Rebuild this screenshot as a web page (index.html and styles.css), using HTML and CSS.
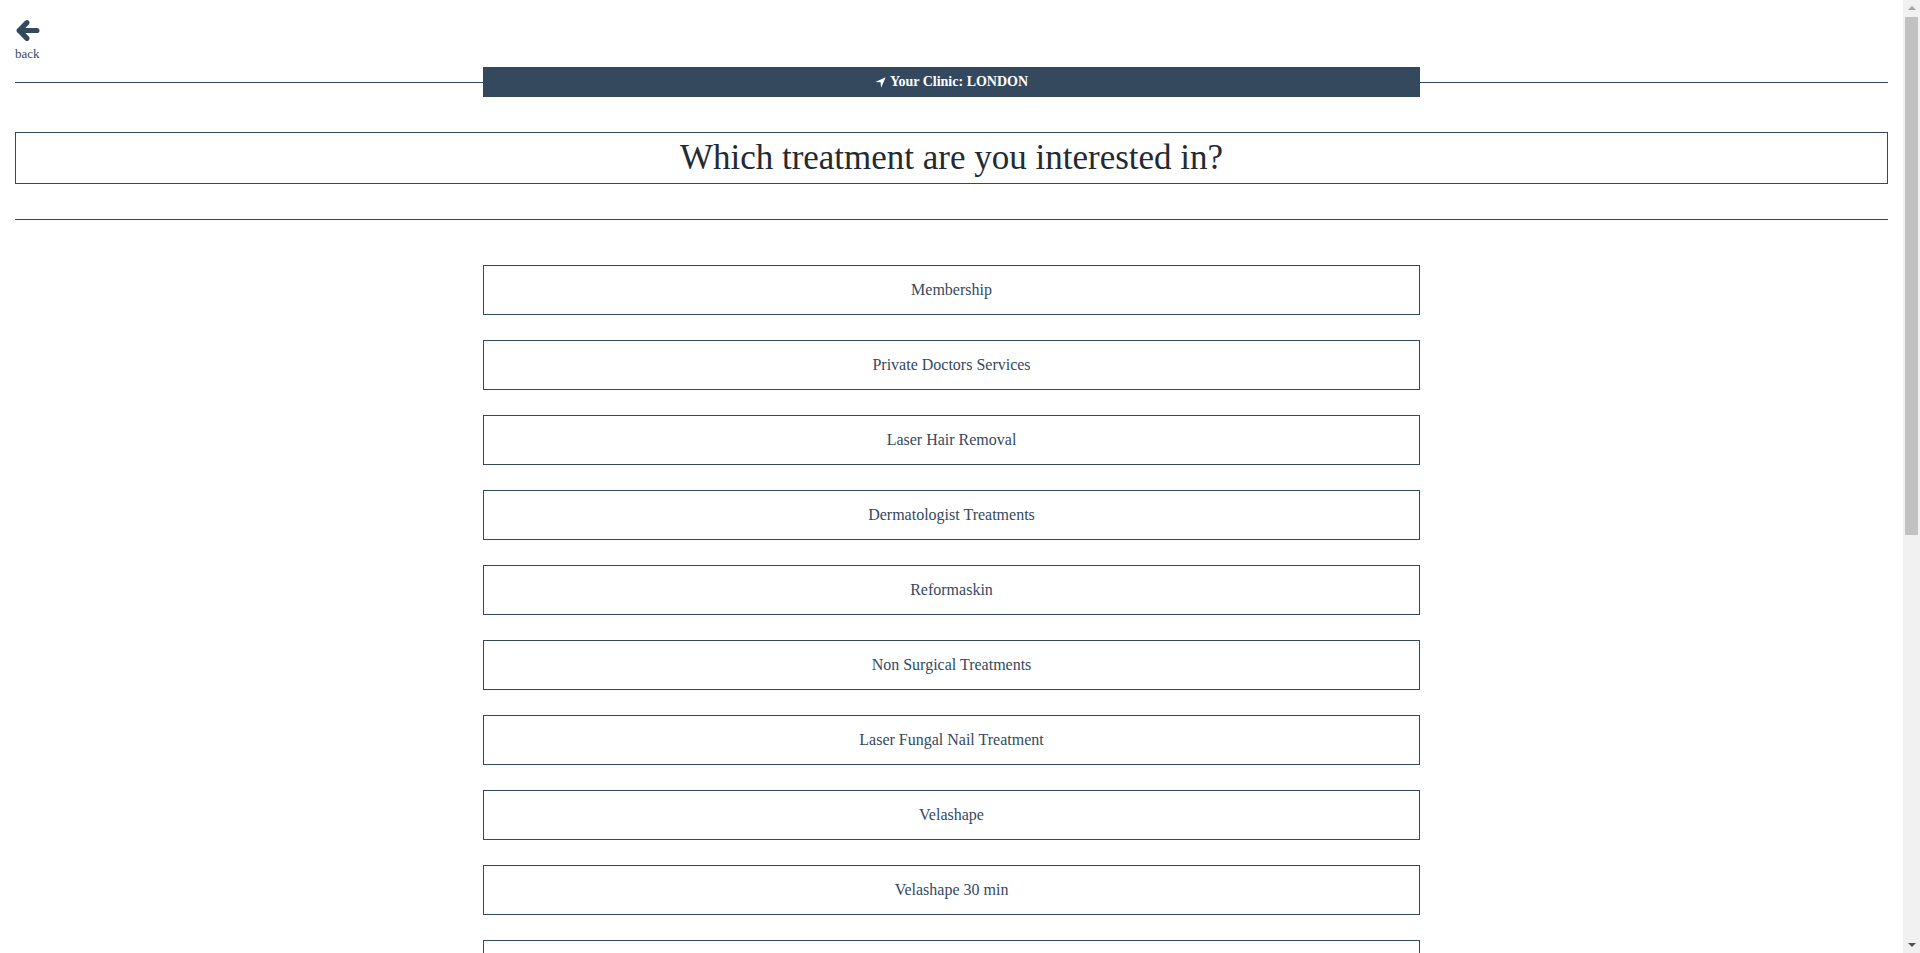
FILE: index.html
```html
<!DOCTYPE html>
<html lang="en">
<head>
<meta charset="utf-8">
<title>Which treatment are you interested in?</title>
<link rel="stylesheet" href="styles.css">
</head>
<body>
<div class="page">
  <a class="back" href="#">
    <svg class="back-icon" width="25" height="23" viewBox="0 0 24 22" aria-hidden="true">
      <path d="M21 11 H4 M11.5 3.5 L4 11 L11.5 18.5" fill="none" stroke="#34495e" stroke-width="5" stroke-linecap="round" stroke-linejoin="round"/>
    </svg>
    <span class="back-label">back</span>
  </a>

  <div class="clinic-row">
    <div class="rule"></div>
    <div class="clinic-bar">
      <svg class="loc-icon" width="11" height="11" viewBox="0 0 16 16" aria-hidden="true">
        <path d="M15.5 0.5 L0.5 7.2 L8.2 7.8 L8.8 15.5 Z" fill="#ffffff"/>
      </svg>
      <span>Your Clinic: LONDON</span>
    </div>
    <div class="rule"></div>
  </div>

  <h1 class="title">Which treatment are you interested in?</h1>

  <hr class="divider">

  <ul class="treatments">
    <li><button class="treatment">Membership</button></li>
    <li><button class="treatment">Private Doctors Services</button></li>
    <li><button class="treatment">Laser Hair Removal</button></li>
    <li><button class="treatment">Dermatologist Treatments</button></li>
    <li><button class="treatment">Reformaskin</button></li>
    <li><button class="treatment">Non Surgical Treatments</button></li>
    <li><button class="treatment">Laser Fungal Nail Treatment</button></li>
    <li><button class="treatment">Velashape</button></li>
    <li><button class="treatment">Velashape 30 min</button></li>
    <li><button class="treatment">Skin Consultation</button></li>
    <li><button class="treatment">Injectables</button></li>
    <li><button class="treatment">Chemical Peels</button></li>
    <li><button class="treatment">Microneedling</button></li>
    <li><button class="treatment">Tattoo Removal</button></li>
    <li><button class="treatment">Vein Treatments</button></li>
    <li><button class="treatment">Skin Tightening</button></li>
    <li><button class="treatment">Acne Treatments</button></li>
  </ul>
</div>

<div class="scrollbar" aria-hidden="true">
  <div class="scroll-arrow up"></div>
  <div class="scroll-thumb"></div>
  <div class="scroll-arrow down"></div>
</div>
</body>
</html>
```

FILE: styles.css
```css
html, body {
  margin: 0;
  padding: 0;
  background: #ffffff;
}

body {
  font-family: "Liberation Serif", "DejaVu Serif", serif;
  color: #34495e;
}

.page {
  width: calc(100% - 17px);
  box-sizing: border-box;
  padding: 19px 15px 40px 15px;
}

.back {
  display: inline-flex;
  flex-direction: column;
  align-items: flex-start;
  text-decoration: none;
  color: #34495e;
}

.back-icon {
  display: block;
}

.back-label {
  font-size: 13px;
  line-height: 14px;
  margin-top: 5px;
}

.clinic-row {
  display: flex;
  align-items: center;
  margin-top: 6px;
}

.rule {
  flex: 1;
  border-top: 1px solid #34495e;
}

.clinic-bar {
  width: 937px;
  height: 30px;
  background: #34495e;
  color: #ffffff;
  display: flex;
  align-items: center;
  justify-content: center;
  gap: 4px;
  font-weight: bold;
  font-size: 14px;
}

.loc-icon {
  display: block;
}

.title {
  margin: 35px 0 0 0;
  border: 1px solid #34495e;
  height: 50px;
  display: flex;
  align-items: center;
  justify-content: center;
  font-weight: normal;
  font-size: 35px;
  color: #222a33;
}

.divider {
  margin: 35px 0 0 0;
  border: 0;
  border-top: 1px solid #34495e;
  height: 0;
}

.treatments {
  list-style: none;
  margin: 45px 0 0 0;
  padding: 0;
  display: flex;
  flex-direction: column;
  align-items: center;
  gap: 25px;
}

.treatments li {
  width: 937px;
}

.treatment {
  width: 100%;
  height: 50px;
  background: #ffffff;
  border: 1px solid #34495e;
  border-radius: 0;
  color: #34495e;
  font-family: "Liberation Serif", "DejaVu Serif", serif;
  font-size: 16px;
  cursor: pointer;
  padding: 0;
}

.scrollbar {
  position: fixed;
  top: 0;
  right: 0;
  bottom: 0;
  width: 17px;
  background: #f1f1f1;
  display: flex;
  flex-direction: column;
  align-items: center;
}

.scroll-arrow {
  width: 0;
  height: 0;
  border-left: 4px solid transparent;
  border-right: 4px solid transparent;
  margin: 6px 0;
}

.scroll-arrow.up {
  border-bottom: 4px solid #a3a3a3;
}

.scroll-arrow.down {
  border-top: 4px solid #505050;
  margin-top: auto;
}

.scroll-thumb {
  width: 13px;
  height: 518px;
  background: #c1c1c1;
  margin-top: 1px;
}
```
